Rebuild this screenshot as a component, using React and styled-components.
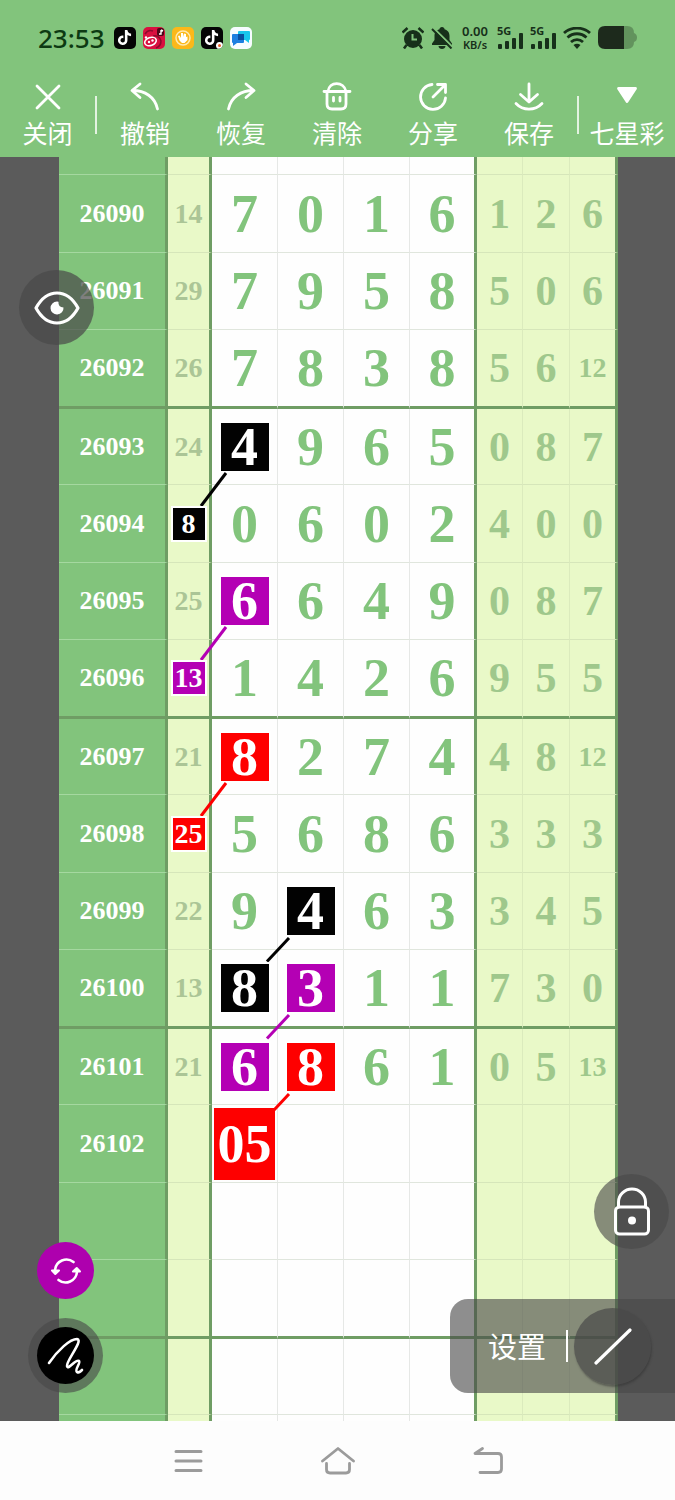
import React from "react";
import styled, { createGlobalStyle } from "styled-components";
import { FaTiktok } from "react-icons/fa6";

const GREEN = "#82c47c";
const LIME = "#e9f9c8";
const LINE = "#6f9d64";
const BLACK = "#020202";
const PURPLE = "#b400b4";
const RED = "#fe0000";
const INK = "#17301a";

// marks: color of the square and where its connecting line goes
const draws = [
  { issue: "", sum: "", front: ["", "", "", ""], back: ["", "", ""] },
  { issue: "26090", sum: "14", front: ["7", "0", "1", "6"], back: ["1", "2", "6"] },
  { issue: "26091", sum: "29", front: ["7", "9", "5", "8"], back: ["5", "0", "6"] },
  { issue: "26092", sum: "26", front: ["7", "8", "3", "8"], back: ["5", "6", "12"] },
  { issue: "26093", sum: "24", front: ["4", "9", "6", "5"], back: ["0", "8", "7"], marks: { 0: { color: BLACK, link: "sum" } } },
  { issue: "26094", sum: "8", front: ["0", "6", "0", "2"], back: ["4", "0", "0"], marks: { sum: { color: BLACK } } },
  { issue: "26095", sum: "25", front: ["6", "6", "4", "9"], back: ["0", "8", "7"], marks: { 0: { color: PURPLE, link: "sum" } } },
  { issue: "26096", sum: "13", front: ["1", "4", "2", "6"], back: ["9", "5", "5"], marks: { sum: { color: PURPLE } } },
  { issue: "26097", sum: "21", front: ["8", "2", "7", "4"], back: ["4", "8", "12"], marks: { 0: { color: RED, link: "sum" } } },
  { issue: "26098", sum: "25", front: ["5", "6", "8", "6"], back: ["3", "3", "3"], marks: { sum: { color: RED } } },
  { issue: "26099", sum: "22", front: ["9", "4", "6", "3"], back: ["3", "4", "5"], marks: { 1: { color: BLACK, link: "digit" } } },
  { issue: "26100", sum: "13", front: ["8", "3", "1", "1"], back: ["7", "3", "0"], marks: { 0: { color: BLACK }, 1: { color: PURPLE, link: "digit" } } },
  { issue: "26101", sum: "21", front: ["6", "8", "6", "1"], back: ["0", "5", "13"], marks: { 0: { color: PURPLE }, 1: { color: RED, link: "digit" } } },
  { issue: "26102", sum: "", front: ["05", "", "", ""], back: ["", "", ""], marks: { 0: { color: RED, wide: true } } },
  { issue: "", sum: "", front: ["", "", "", ""], back: ["", "", ""] },
  { issue: "", sum: "", front: ["", "", "", ""], back: ["", "", ""] },
  { issue: "", sum: "", front: ["", "", "", ""], back: ["", "", ""] },
  { issue: "", sum: "", front: ["", "", "", ""], back: ["", "", ""] },
];

const rowHeights = [76, 78, 77, 79];
const columns = [109, 44, 66, 66, 66, 67, 46, 47, 48];

const links = {
  sum: "M5 50 L-20 83",
  digit: "M2 51 L-20 74.5",
};

const Stroke = ({ size = 30, width = 2.8, children, ...rest }) => (
  <svg
    width={size}
    height={size}
    viewBox={`0 0 ${size} ${size}`}
    fill="none"
    stroke="currentColor"
    strokeWidth={width}
    strokeLinecap="round"
    strokeLinejoin="round"
    aria-hidden="true"
    {...rest}
  >
    {children}
  </svg>
);

const CloseIcon = () => (
  <Stroke>
    <path d="M4 4 L26 26 M26 4 L4 26" />
  </Stroke>
);

const UndoIcon = () => (
  <Stroke>
    <path d="M10 2 L2 8.5 L10 15.5 M2.5 8.5 C15 8.5 25 15 27.5 27" />
  </Stroke>
);

const RedoIcon = () => (
  <Stroke>
    <path d="M20 2 L28 8.5 L20 15.5 M27.5 8.5 C15 8.5 5 15 2.5 27" />
  </Stroke>
);

const ClearIcon = () => (
  <Stroke>
    <path d="M2 9.5 H28 M6 9.5 C7 -1 22 -1 24 9.5 M5 9.5 V22 Q5 27 10 27 H19 Q24 27 24 22 V9.5 M11.5 15.5 V19 M18 15.5 V19" />
  </Stroke>
);

const ShareIcon = () => (
  <Stroke>
    <path d="M14 2.5 A12.5 12.5 0 1 0 27.5 16 M15 15 L27 3 M19.5 2.5 H27.5 V10.5" />
  </Stroke>
);

const SaveIcon = () => (
  <Stroke>
    <path d="M15 2 V19 M6.5 12.5 L15 20 L23.5 12.5 M2 21.5 C9 29 21 29 28 21.5" />
  </Stroke>
);

const MenuDownIcon = () => (
  <Stroke>
    <path fill="currentColor" d="M6.5 6.5 H23.5 L15 19.5 Z" />
  </Stroke>
);

const AlarmIcon = () => (
  <svg width="22" height="22" viewBox="0 0 22 22" aria-hidden="true">
    <circle cx="11" cy="12" r="9" fill={INK} />
    <path d="M10.5 7 V12.5 H15" fill="none" stroke={GREEN} strokeWidth="2" />
    <path d="M0.500 5.500 L5.500 1 M21.500 5.500 L16.500 1 M4.500 18 L2 21.500 M17.500 18 L20 21.500" fill="none" stroke={INK} strokeWidth="2.500" />
  </svg>
);

const BellOffIcon = () => (
  <svg width="22" height="22" viewBox="0 0 22 22" aria-hidden="true">
    <path
      d="M11 0 C12.5 0 13.500 1 13.500 2.200 C17.500 3.500 18.500 6 18.500 9 V13 L21 16.500 V18 H1 V16.500 L3.500 13 V9 C3.500 6 4.500 3.500 8.500 2.200 C8.500 1 9.500 0 11 0 Z M7.500 19 H14.500 C14.500 23 7.500 23 7.500 19 Z"
      fill={INK}
    />
    <path d="M2.500 1 L22 20.500" stroke={GREEN} strokeWidth="2" />
    <path d="M1 2 L20.500 21.500" stroke={INK} strokeWidth="2" />
  </svg>
);

const BarsIcon = () => (
  <svg width="26" height="16" viewBox="0 0 26 16" fill={INK} aria-hidden="true">
    <rect x="1" y="11" width="4" height="5" rx="1" />
    <rect x="8" y="8" width="4" height="8" rx="1" />
    <rect x="15" y="5" width="4" height="11" rx="1" />
    <rect x="22" y="0" width="4" height="16" rx="1" />
  </svg>
);

const WifiIcon = () => (
  <svg width="28" height="22" viewBox="0 0 28 22" fill="none" stroke={INK} strokeWidth="2.8" aria-hidden="true">
    <path d="M1 6 C8 -0.500 20 -0.500 27 6 M4.500 10.500 C10 5.500 18 5.500 23.500 10.500 M8 15 C11.500 11.800 16.500 11.800 20 15" />
    <path d="M10.500 18 Q14 15.500 17.500 18 L14 22 Z" fill={INK} stroke="none" />
  </svg>
);

const BatteryIcon = () => (
  <svg width="39" height="23" viewBox="0 0 39 23" aria-hidden="true">
    <path d="M26 0 H29 Q36 0 36 7 V16 Q36 23 29 23 H26 Z M36 7 Q39 8 39 11.5 Q39 15 36 16 Z" fill="#62935d" />
    <path d="M26 0 V23 H7 Q0 23 0 16 V7 Q0 0 7 0 Z" fill="#1d2a1c" />
  </svg>
);

const Link = ({ to, color }) => (
  <LinkSvg width="48" height="48" aria-hidden="true">
    <path d={links[to]} stroke={color} strokeWidth="3" fill="none" />
  </LinkSvg>
);

const Digit = ({ value, mark, size, box }) => {
  if (!mark) return value;
  return (
    <Mark $color={mark.color} $box={box} $wide={mark.wide} $size={size}>
      {value}
      {mark.link && <Link to={mark.link} color={mark.color} />}
    </Mark>
  );
};

const tools = [
  { label: "撤销", icon: <UndoIcon /> },
  { label: "恢复", icon: <RedoIcon /> },
  { label: "清除", icon: <ClearIcon /> },
  { label: "分享", icon: <ShareIcon /> },
  { label: "保存", icon: <SaveIcon /> },
];

const StatusBar = () => (
  <Status>
    <Time>23:53</Time>
    <Apps>
      <AppIcon $bg="#050505">
        <FaTiktok size={15} color="#fff" />
      </AppIcon>
      <AppIcon $bg="#d9103f">
        <svg width="22" height="22" viewBox="0 0 22 22" fill="none">
          <path d="M2 7 Q5 2 10 4 M10 9 Q16 8 18 14 Q18 19 13 21" stroke="#8d0a2c" strokeWidth="1.5" />
          <ellipse cx="7.500" cy="14.500" rx="6" ry="4" stroke="#fff" strokeWidth="1.500" transform="rotate(-20 7.500 14.500)" />
          <circle cx="6" cy="15" r="1.200" fill="#fff" />
          <circle cx="9.500" cy="13.500" r="1.200" fill="#fff" />
          <circle cx="3" cy="10.500" r="1.200" fill="#fff" />
          <rect x="14" y="1" width="7" height="8" rx="2" fill="#4d0718" />
          <path d="M18 3 V7 H16 M18 3 L20 4" stroke="#fff" strokeWidth="1.400" />
        </svg>
      </AppIcon>
      <AppIcon $bg="#fbb81a">
        <svg width="22" height="22" viewBox="0 0 22 22" fill="none">
          <circle cx="11" cy="11" r="7" stroke="#ffe9b0" strokeWidth="1.500" />
          <path d="M6 9 L7.500 8.500 L9 11 V6 H11 V10 L12 6.500 L14 7 V10 L15.500 9.500 V13 L12.500 16 H10 L7.500 13.500 Z" fill="#fff" />
        </svg>
      </AppIcon>
      <AppIcon $bg="#050505">
        <FaTiktok size={15} color="#fff" />
        <AppBadge />
      </AppIcon>
      <AppIcon $bg="#f7fcff">
        <svg width="22" height="22" viewBox="0 0 22 22">
          <rect x="8" y="4" width="12" height="9" rx="1" fill="#19c6ec" />
          <rect x="2" y="7" width="12" height="9" rx="1" fill="#1d7fe0" />
          <rect x="8" y="7" width="6" height="6" fill="#0b4f9e" />
          <path d="M3 16 V19 L7 16 Z" fill="#1d7fe0" />
          <path d="M15 13 H19 V16 Z" fill="#19c6ec" />
        </svg>
      </AppIcon>
    </Apps>
    <System>
      <AlarmIcon />
      <BellOffIcon />
      <Speed>
        <b>0.00</b>
        <small>KB/s</small>
      </Speed>
      <Signal>
        <span>5G</span>
        <BarsIcon />
      </Signal>
      <Signal>
        <span>5G</span>
        <BarsIcon />
      </Signal>
      <WifiIcon />
      <BatteryIcon />
    </System>
  </Status>
);

const App = () => {
  return (
    <Page>
      <GlobalStyle />
      <StatusBar />
      <Toolbar>
        <Tool>
          <CloseIcon />
          关闭
        </Tool>
        <Divider />
        <Tools>
          {tools.map((tool) => (
            <Tool key={tool.label}>
              {tool.icon}
              {tool.label}
            </Tool>
          ))}
        </Tools>
        <Divider />
        <Tool>
          <MenuDownIcon />
          七星彩
        </Tool>
      </Toolbar>

      <Board>
        <Chart>
          <colgroup>
            {columns.map((width, i) => (
              <Col key={i} $width={width} />
            ))}
          </colgroup>
          <tbody>
            {draws.map((draw, i) => {
              const marks = draw.marks || {};
              return (
                <Row key={i} $height={i === 0 ? 18 : rowHeights[i % 4]} $thick={i % 4 === 3}>
                  <Issue scope="row">{draw.issue}</Issue>
                  <Sum>
                    <Digit value={draw.sum} mark={marks.sum} size={28} box={32} />
                  </Sum>
                  {draw.front.map((value, n) => (
                    <Front key={n} $last={n === 3}>
                      <Digit value={value} mark={marks[n]} size={54} box={48} />
                    </Front>
                  ))}
                  {draw.back.map((value, n) => (
                    <Back key={n} $last={n === 2} $small={value.length > 1}>
                      {value}
                    </Back>
                  ))}
                </Row>
              );
            })}
          </tbody>
        </Chart>

        <EyeButton aria-label="显示">
          <Stroke size={46} width={3.2}>
            <path d="M2 23 C13 3 33 3 44 23 C33 43 13 43 2 23 Z" />
            <path
              d="M23 16.5 A6.5 6.5 0 1 0 29.5 22.5 Q24 22.5 24.5 16.8 Z"
              fill="currentColor"
              stroke="none"
            />
          </Stroke>
        </EyeButton>

        <LockButton aria-label="锁定">
          <Stroke size={50} width={3}>
            <path d="M11.5 20 V15 A13.5 13 0 0 1 38.5 15 V20" />
            <rect x="8.5" y="20" width="33" height="27" rx="4" />
            <circle cx="25" cy="33.5" r="4" fill="currentColor" stroke="none" />
          </Stroke>
        </LockButton>

        <SwapButton aria-label="切换颜色">
          <Stroke size={32} width={2.6}>
            <path d="M5 15 A11.500 11.500 0 0 1 23.500 7 M27 17 A11.500 11.500 0 0 1 8.500 25" />
            <path d="M2 15.500 H9 L5.300 19 Z M23 16.500 H30 L26.700 13 Z" fill="currentColor" strokeWidth="2" />
          </Stroke>
        </SwapButton>

        <PenButton aria-label="画笔">
          <PenDisc>
            <Stroke size={40} width={2.6}>
              <path d="M3 27 C12 14 24 3 31 3 C38 4 20 25 21 30 C22 35 29 23 33 25 C35 27 28 34 31 36 C33 37 34 36 36 34" />
            </Stroke>
          </PenDisc>
        </PenButton>

        <Settings>
          <SettingsButton>设置</SettingsButton>
          <SettingsBar />
          <LineButton aria-label="直线">
            <Stroke size={38} width={3.2}>
              <path d="M2 36 L36 3" />
            </Stroke>
          </LineButton>
        </Settings>
      </Board>

      <NavBar>
        <NavButton aria-label="最近任务">
          <Stroke size={32} width={3}>
            <path d="M4 6.5 H29 M4 16 H29 M4 25.5 H29" />
          </Stroke>
        </NavButton>
        <NavButton aria-label="主页">
          <Stroke size={34} width={2.8}>
            <path d="M1.5 17 L17 4.5 L32.5 17 M5.5 19.5 V25.500 Q5.5 29 9 29 H25 Q28.5 29 28.5 25.5 V19.5" />
          </Stroke>
        </NavButton>
        <NavButton aria-label="返回">
          <Stroke size={32} width={2.8}>
            <path d="M10.5 3.5 L3 8.5 H26 Q29.5 8.5 29.5 12 V24 Q29.5 27.5 26 27.5 H8" />
          </Stroke>
        </NavButton>
      </NavBar>
    </Page>
  );
};

export default App;

const GlobalStyle = createGlobalStyle`
  * {
    box-sizing: border-box;
  }

  body {
    margin: 0;
    font-family: "Noto Sans", "Noto Sans CJK SC", sans-serif;
  }

  button {
    border: 0;
    padding: 0;
    margin: 0;
    background: none;
    color: inherit;
    font: inherit;
  }

  svg {
    display: block;
    flex: none;
  }
`;

const Page = styled.div`
  display: flex;
  flex-direction: column;
  height: 100vh;
  background: ${GREEN};
`;

const Status = styled.header`
  display: flex;
  align-items: center;
  height: 75px;
  padding: 0 38px;
  color: ${INK};
`;

const Time = styled.span`
  font-size: 26px;
  line-height: 36px;
  font-weight: 500;
  color: #0d3a12;
`;

const Apps = styled.div`
  display: flex;
  gap: 7px;
  margin-left: 9px;
`;

const AppIcon = styled.span`
  position: relative;
  display: flex;
  align-items: center;
  justify-content: center;
  width: 22px;
  height: 22px;
  border-radius: 5px;
  overflow: hidden;
  background: ${(props) => props.$bg};
`;

const AppBadge = styled.span`
  position: absolute;
  right: 0;
  bottom: 0;
  width: 7px;
  height: 7px;
  border: 2px solid #fff;
  border-radius: 4px;
  background: #e8602c;
`;

const System = styled.div`
  display: flex;
  align-items: center;
  gap: 7px;
  margin-left: auto;
`;

const Speed = styled.div`
  display: flex;
  flex-direction: column;
  align-items: center;
  width: 30px;
  font-weight: 600;
  line-height: 13px;

  b {
    font-size: 13px;
    font-weight: 600;
  }

  small {
    font-size: 11px;
  }
`;

const Signal = styled.div`
  display: grid;
  width: 26px;
  height: 23px;

  span,
  svg {
    grid-area: 1 / 1;
  }

  span {
    font-size: 11px;
    font-weight: 700;
    line-height: 10px;
  }

  svg {
    align-self: end;
  }
`;

const Toolbar = styled.div`
  display: grid;
  grid-template-columns: 95fr 2px 480fr 2px 96fr;
  align-items: center;
  height: 82px;
  padding-bottom: 2px;
  color: #fff;
`;

const Tools = styled.div`
  display: grid;
  grid-template-columns: repeat(5, 1fr);
`;

const Tool = styled.button`
  display: flex;
  flex-direction: column;
  align-items: center;
  gap: 6px;
  font-size: 25px;
  line-height: 30px;
  white-space: nowrap;
`;

const Divider = styled.span`
  height: 38px;
  background: #e3f3e1;
`;

const Board = styled.main`
  position: relative;
  flex: 1;
  min-height: 0;
  overflow: hidden;
  padding: 0 57px 0 59px;
  background: #5b5b5b;
`;

const Chart = styled.table`
  width: 100%;
  table-layout: fixed;
  border-collapse: separate;
  border-spacing: 0;
  font-family: "Liberation Serif", "Noto Sans CJK SC", serif;
  font-weight: 700;
  line-height: 1;
  text-align: center;
`;

const Col = styled.col`
  width: ${(props) => props.$width}px;
`;

const Issue = styled.th`
  background: ${GREEN};
  color: #fff;
  font-size: 26px;
  border-right: 3px solid ${LINE};
`;

const Sum = styled.td`
  background: ${LIME};
  color: #abc596;
  font-size: 28px;
  border-right: 3px solid ${LINE};
`;

const Front = styled.td`
  background: #fefefe;
  color: ${GREEN};
  font-size: 54px;
  border-right: ${(props) => (props.$last ? `3px solid ${LINE}` : "1px solid #e6e8e6")};
`;

const Back = styled.td`
  background: ${LIME};
  color: #9fc88c;
  font-size: ${(props) => (props.$small ? 28 : 42)}px;
  border-right: ${(props) => (props.$last ? `3px solid ${LINE}` : "1px solid #dbebbd")};
`;

const Row = styled.tr`
  height: ${(props) => props.$height}px;

  th,
  td {
    padding: 0;
    border-bottom: ${(props) => (props.$thick ? `3px solid ${LINE}` : "1px solid #e0e6dd")};
  }

  ${Issue} {
    border-bottom-color: ${(props) => (props.$thick ? LINE : "#a5d8a0")};
  }

  ${Sum}, ${Back} {
    border-bottom-color: ${(props) => (props.$thick ? LINE : "#d6e6ba")};
  }
`;

const Mark = styled.span`
  position: relative;
  display: flex;
  align-items: center;
  justify-content: center;
  width: ${(props) => (props.$wide ? 61 : props.$box)}px;
  height: ${(props) => (props.$wide ? 72 : props.$box)}px;
  margin: 0 auto;
  background: ${(props) => props.$color};
  color: #fff;
  font-size: ${(props) => props.$size}px;
  box-shadow: ${(props) => (props.$wide ? "none" : "0 0 0 2px #fff")};
`;

const LinkSvg = styled.svg`
  position: absolute;
  top: 0;
  left: 0;
  overflow: visible;
`;

const RoundButton = styled.button`
  position: absolute;
  display: flex;
  align-items: center;
  justify-content: center;
  width: 75px;
  height: 75px;
  border-radius: 50%;
  background: rgba(73, 73, 73, 0.62);
  color: #fff;
`;

const EyeButton = styled(RoundButton)`
  left: 19px;
  top: 113px;
  background: rgba(73, 73, 73, 0.7);
`;

const LockButton = styled(RoundButton)`
  right: 6px;
  bottom: 172px;
`;

const SwapButton = styled(RoundButton)`
  left: 37px;
  bottom: 122px;
  width: 57px;
  height: 57px;
  background: #ae00ae;
`;

const PenButton = styled(RoundButton)`
  left: 28px;
  bottom: 28px;
`;

const PenDisc = styled.span`
  display: flex;
  align-items: center;
  justify-content: center;
  width: 57px;
  height: 57px;
  border-radius: 50%;
  background: #000;
`;

const Settings = styled.div`
  position: absolute;
  right: 0;
  bottom: 28px;
  display: flex;
  align-items: center;
  height: 94px;
  padding: 0 24px 0 38px;
  border-radius: 18px 0 0 18px;
  background: rgba(73, 73, 73, 0.62);
  color: #fff;
`;

const SettingsButton = styled.button`
  padding-top: 2px;
  font-size: 29px;
  line-height: 40px;
`;

const SettingsBar = styled.span`
  width: 2px;
  height: 32px;
  margin: 0 6px 0 20px;
  background: #fff;
`;

const LineButton = styled.button`
  display: flex;
  align-items: center;
  justify-content: center;
  width: 77px;
  height: 77px;
  border-radius: 50%;
  background: rgba(73, 73, 73, 0.7);
  box-shadow: 1px 2px 2px rgba(50, 50, 50, 0.5);
`;

const NavBar = styled.nav`
  display: flex;
  justify-content: center;
  height: 79px;
  background: #fdfdfd;
  color: #9b9b9b;
`;

const NavButton = styled.button`
  display: flex;
  align-items: center;
  justify-content: center;
  width: 150px;
`;
